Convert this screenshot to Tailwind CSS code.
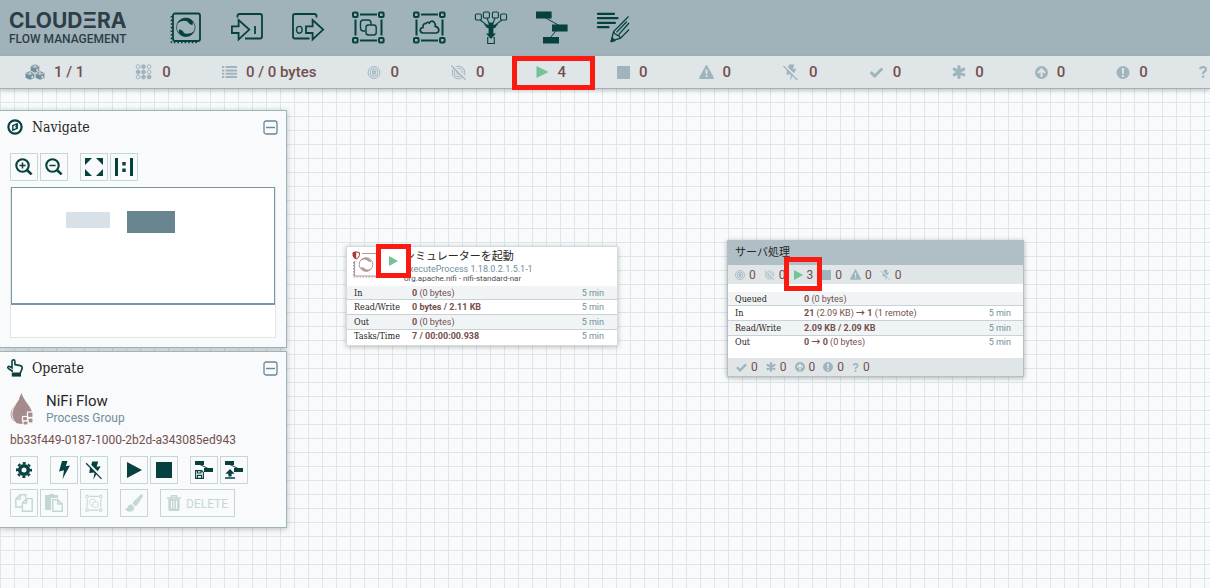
<!DOCTYPE html>
<html lang="ja">
<head>
<meta charset="utf-8">
<meta name="viewport" content="width=device-width, initial-scale=1">
<title>Cloudera Flow Management</title>
<script src="https://cdn.jsdelivr.net/npm/@tailwindcss/browser@4"></script>
</head>
<body class="h-screen flex flex-col overflow-hidden bg-[#f9fafb] font-['Roboto','Noto_Sans_CJK_JP',sans-serif] text-[#262626]">

<!-- Shared icon sprite -->
<svg class="hidden" aria-hidden="true">
  <symbol id="target" viewBox="0 0 13 13"><g fill="none" stroke="currentColor"><circle cx="6.5" cy="6.5" r="5.9" stroke-width="1"/><circle cx="6.5" cy="6.5" r="3.8" stroke-width="1"/><circle cx="6.5" cy="6.5" r="1.4" stroke-width="1.5"/></g></symbol>
  <symbol id="untarget" viewBox="0 0 17 15"><g fill="none" stroke="currentColor"><circle cx="8.5" cy="7.5" r="6.3"/><circle cx="8.5" cy="7.5" r="4.1"/><circle cx="8.5" cy="7.5" r="1.8"/><path d="M2.6 0 L16.4 13.8" stroke="#e0e5e8" stroke-width="2"/><path d="M1.2 .4 L15.6 14.8" stroke-width="1.2"/></g></symbol>
  <symbol id="play" viewBox="0 0 12 12"><path d="M0 0L12 6L0 12Z" fill="currentColor"/></symbol>
  <symbol id="stop" viewBox="0 0 13 13"><path d="M0 0H13V13H0Z" fill="currentColor"/></symbol>
  <symbol id="warn" viewBox="0 0 15 14"><path fill="currentColor" fill-rule="evenodd" d="M7.5 0Q8 0 8.4.7L14.8 12.4Q15.3 14 14 14H1Q-.3 14 .2 12.4L6.6.7Q7 0 7.5 0ZM6.5 4.5L6.8 9.3H8.2L8.5 4.5ZM6.6 10.3V12.1H8.4V10.3Z"/></symbol>
  <symbol id="bolt" viewBox="0 0 12 18"><path fill="currentColor" d="M4 0H9.5L7.8 5.3L12 4.5L4.6 18L6 9.3L1 10.4Z"/></symbol>
  <symbol id="nobolt" viewBox="0 0 17 17"><path fill="currentColor" d="M6.5 .5H11.8L10.4 5.2L14 4.6L11.4 9.2L5.6 3.6ZM4.6 5.4L9.6 10.6L10.4 11.4L7.4 16.8L8.6 10.2L3.8 10.8Z"/><path d="M1 2L14.8 16" stroke="currentColor" stroke-width="1.2"/></symbol>
  <symbol id="check" viewBox="0 0 14 11"><path d="M1.2 5.2L5.2 9L12.8 1.5" fill="none" stroke="currentColor" stroke-width="3"/></symbol>
  <symbol id="asterisk" viewBox="0 0 14 14"><path d="M7 1.6V12.4M2.2 4.2L11.8 9.8M11.8 4.2L2.2 9.8" fill="none" stroke="currentColor" stroke-width="3.2" stroke-linecap="round"/></symbol>
  <symbol id="arrowup" viewBox="0 0 13 13"><path fill="currentColor" fill-rule="evenodd" d="M6.5 0A6.5 6.5 0 1 1 6.5 13A6.5 6.5 0 1 1 6.5 0ZM6.5 2L2.2 6.3L3.6 7.7L5.5 5.9V11H7.5V5.9L9.4 7.7L10.8 6.3Z"/></symbol>
  <symbol id="exclaim" viewBox="0 0 13 13"><path fill="currentColor" fill-rule="evenodd" d="M6.5 0A6.5 6.5 0 1 1 6.5 13A6.5 6.5 0 1 1 6.5 0ZM5.3 2.2L5.7 8H7.3L7.7 2.2ZM5.5 9V10.9H7.5V9Z"/></symbol>
  <symbol id="question" viewBox="0 0 8 12"><path d="M1 3.3Q1.6 1 4 1Q7 1.2 6.9 3.6Q6.8 5 5.2 5.8Q4 6.4 4 8" fill="none" stroke="currentColor" stroke-width="2.2"/><path d="M2.9 9.4H5.2V11.8H2.9Z" fill="currentColor"/></symbol>
  <symbol id="processor" viewBox="0 0 34 34"><g fill="none" stroke="currentColor"><rect x="4" y="2.5" width="27" height="27.5" rx="2" stroke-width="1.8"/><path d="M2.5 5V31.5H29" stroke-width="1.6" stroke-dasharray="1.6 2"/><circle cx="16.8" cy="16.3" r="9.3" stroke-width=".7"/></g><path fill="currentColor" d="M8 12.5Q11 7 17 7Q22 7 24 11L23.5 14Q20.5 14 18.5 10.6Q13.5 8.2 8 12.5ZM25.6 20Q22.6 25.6 16.6 25.6Q11.6 25.6 9.6 21.6L10.1 18.6Q13.1 18.6 15.1 22Q20.1 24.4 25.6 20Z"/></symbol>
  <symbol id="frame" viewBox="0 0 33 34"><g fill="none" stroke="currentColor"><path d="M8 4.5H25M8 30.5H25M3.5 9.5V25.5M29.5 9.5V25.5" stroke-width="2"/><g stroke-width="2"><rect x="1" y="2.5" width="4.6" height="4.6" rx="1"/><rect x="27" y="2.5" width="4.6" height="4.6" rx="1"/><rect x="1" y="28" width="4.6" height="4.6" rx="1"/><rect x="27" y="28" width="4.6" height="4.6" rx="1"/></g></g></symbol>
  <symbol id="group" viewBox="0 0 33 34"><use href="#frame"/><g fill="none" stroke="currentColor"><path d="M13.5 21H11.5Q8.5 21 8.5 18V13Q8.5 10 11.5 10H16Q19 10 19 13V15" stroke-width="1.4"/><rect x="14" y="15" width="10.2" height="10" rx="2.5" stroke-width="1.4"/></g></symbol>
</svg>

<header class="relative z-20 flex flex-col shrink-0">
  <div class="flex items-center h-14 bg-[#a0b2ba]">
    <h1 class="w-[155px] shrink-0 pl-[9px] text-[#2f3d48]" aria-label="Cloudera Flow Management">
      <span class="block text-[21px] leading-[22px] font-bold whitespace-nowrap font-['Inter',sans-serif]">CLOUDΞRA</span>
      <span class="block text-[12px] leading-[14px] font-medium whitespace-nowrap">FLOW MANAGEMENT</span>
    </h1>
    <nav class="flex text-[#06413f]" aria-label="Components">
      <button class="w-[61px] h-14 grid place-items-center" aria-label="Processor"><svg class="w-[34px] h-[34px]"><use href="#processor"/></svg></button>
      <button class="w-[61px] h-14 grid place-items-center" aria-label="Input Port"><svg class="w-[34px] h-[34px]" viewBox="-1 1 34 34" fill="none" stroke="currentColor" stroke-width="1.8"><path d="M6.5 7.5V6Q6.5 4 8.5 4H29Q31 4 31 6V26.5Q31 28.5 29 28.5H14"/><path d="M.9 16.3H7.6V10L18.3 19.6L7.6 29.5V23H.9Z"/><path d="M24 16V24"/></svg></button>
      <button class="w-[61px] h-14 grid place-items-center" aria-label="Output Port"><svg class="w-[34px] h-[34px]" viewBox="-1 1 34 34" fill="none" stroke="currentColor" stroke-width="1.8"><path d="M24.5 7.5V6Q24.5 4 22.5 4H3Q1 4 1 6V26.5Q1 28.5 3 28.5H17.5"/><path d="M14 16.3H20.6V10L31.2 19.6L20.6 29.5V23H14Z"/><ellipse cx="7.3" cy="19.8" rx="2.8" ry="3.4" stroke-width="1.4"/></svg></button>
      <button class="w-[61px] h-14 grid place-items-center" aria-label="Process Group"><svg class="w-[33px] h-[34px]" viewBox="0 1 33 34"><use href="#group" width="33" height="34"/></svg></button>
      <button class="w-[61px] h-14 grid place-items-center" aria-label="Remote Process Group"><svg class="w-[33px] h-[34px]" viewBox="0 1 33 34"><use href="#frame" width="33" height="34"/><path d="M10 23Q7 22.6 7.2 19.8Q7.6 17.6 10 17.5Q9.5 13.5 13 13.4Q14.4 11.3 16.3 13Q18 10 21 12Q22.8 13.8 22.2 16.4Q25.6 17 25.8 20Q25.6 23 23 23Z" fill="none" stroke="currentColor" stroke-width="1.7"/></svg></button>
      <button class="w-[61px] h-14 grid place-items-center" aria-label="Funnel"><svg class="w-[34px] h-[34px]" viewBox="-1 1 34 34" fill="none" stroke="currentColor"><g stroke-width="1.1"><rect x=".4" y="4" width="6" height="6" rx="1.3"/><rect x="8.4" y="2" width="6" height="6" rx="1.3"/><rect x="17.4" y="2" width="6" height="6" rx="1.3"/><rect x="25.6" y="4" width="6" height="6" rx="1.3"/><path d="M5 10L11 14.4M12 8L14 13.4M20 8L18 13.4M27 10L21 14.4"/><path d="M13.5 27.5H12.7V33.5H19.3V27.5H18.5"/></g><path d="M9.5 14.5Q16 17.5 22.5 14.5" stroke-width="1.6"/><path d="M11 16.5Q16 18.8 21 16.5" stroke-width="1.4"/><path d="M13.6 12.4H18.4V23.5H21L16 29L11 23.5H13.6Z" fill="currentColor" stroke="none"/></svg></button>
      <button class="w-[61px] h-14 grid place-items-center" aria-label="Template"><svg class="w-[34px] h-[34px]" viewBox="-1 1 34 34"><path d="M8 7L24 16L14 28" fill="none" stroke="currentColor"/><path fill="currentColor" d="M0 1.6H15.6V8.6H0ZM16 14.6H31.6V21.4H16ZM7 27H23V33.6H7Z"/></svg></button>
      <button class="w-[61px] h-14 grid place-items-center" aria-label="Label"><svg class="w-[34px] h-[34px]" viewBox="-1 1 34 34" fill="none" stroke="currentColor"><path d="M.9 3.8H17M.9 8.2H20.5M.9 12.8H18M.9 17.2H11.5" stroke-width="2.2" stroke-linecap="round"/><path d="M31.5 6.5L16.6 21.6L14.2 31L23.6 28.2L32 19.5M29.8 11.5L19.5 22.4M32 13L21.8 24.6M16.6 21.6Q17.5 24.4 20 25Q22.8 25.5 23.6 28.2" stroke-width="1.3"/><path d="M14 32L15 27.6L18.4 30.6Z" fill="currentColor"/></svg></button>
    </nav>
  </div>

  <ul class="relative flex items-center gap-[51px] h-[33px] pl-[25px] bg-[#e0e5e8] border-b border-[#9fb3bc] shadow-[0_2px_4px_rgba(0,0,0,0.2)] text-[15px] leading-5 font-medium text-[#734f4e] whitespace-nowrap *:flex *:shrink-0 *:items-center *:gap-[9px]">
    <li><svg class="w-5 h-4 text-[#728e9b]" viewBox="0 0 20 16" fill="currentColor" stroke="#e0e5e8" stroke-width=".6"><path d="M10 0L14.6 2V7L10 9.2L5.4 7V2ZM5 6.8L9.8 9V14L5 16L.2 14V9ZM15 6.8L19.8 9V14L15 16L10.2 14V9Z"/><path d="M6.2 2.2L10 4L13.8 2.2M1 9.2L5 11L9 9.2M11 9.2L15 11L19 9.2" fill="none"/><path d="M10 1.2L12 2.1L10 3L8 2.1ZM5 8.2L7 9.1L5 10L3 9.1ZM15 8.2L17 9.1L15 10L13 9.1ZM11.4 5.4L13.2 4.6V6.4L11.4 7.3ZM6.4 12.4L8.2 11.6V13.4L6.4 14.2ZM16.4 12.4L18.2 11.6V13.4L16.4 14.2Z" fill="#e0e5e8" stroke="none"/></svg>1 / 1</li>
    <li><svg class="w-[18px] h-4 text-[#a0b4bd]" viewBox="0 0 17 16" fill="none" stroke="currentColor"><g fill="currentColor"><circle cx="2.6" cy="8" r="1.9"/><circle cx="8" cy="8" r="1.9"/><circle cx="13.6" cy="13" r="1.9"/><circle cx="8" cy="13" r="1.9"/><circle cx="8" cy="2.6" r="1.9"/></g><circle cx="2.6" cy="2.6" r="1.9"/><circle cx="13.6" cy="2.6" r="1.9"/><circle cx="13.6" cy="8" r="1.9"/><circle cx="2.6" cy="13" r="1.9"/></svg>0</li>
    <li><svg class="w-[15px] h-3" viewBox="0 0 15 12" stroke="#a0b4bd" stroke-width="2"><path d="M0 1H2.3M0 4.4H2.3M0 7.7H2.3M0 11H2.3M3.7 1H15M3.7 4.4H15M3.7 7.7H15M3.7 11H15"/></svg>0 / 0 bytes</li>
    <li><svg class="w-[14px] h-[13px] text-[#a0b4bd]"><use href="#target"/></svg>0</li>
    <li><svg class="w-[17px] h-[15px] text-[#a0b4bd]"><use href="#untarget"/></svg>0</li>
    <li class="relative"><svg class="w-[13px] h-3 text-[#74c295]"><use href="#play"/></svg>4<span class="absolute -left-6 -top-[6px] w-[83px] h-[34px] border-5 border-[#fb1a12]"></span></li>
    <li><svg class="w-[13px] h-[13px] text-[#a0b4bd]"><use href="#stop"/></svg>0</li>
    <li><svg class="w-[15px] h-[14px] text-[#a0b4bd]"><use href="#warn"/></svg>0</li>
    <li><svg class="w-[18px] h-[17px] text-[#a0b4bd]"><use href="#nobolt"/></svg>0</li>
    <li><svg class="w-[15px] h-[11px] text-[#a0b4bd]"><use href="#check"/></svg>0</li>
    <li><svg class="w-[14px] h-[14px] text-[#a0b4bd]"><use href="#asterisk"/></svg>0</li>
    <li><svg class="w-[13px] h-[13px] text-[#a0b4bd]"><use href="#arrowup"/></svg>0</li>
    <li><svg class="w-[14px] h-[13px] text-[#a0b4bd]"><use href="#exclaim"/></svg>0</li>
    <li><svg class="w-2 h-3 text-[#a0b4bd]"><use href="#question"/></svg></li>
  </ul>
</header>

<main class="relative flex-1 bg-[linear-gradient(to_right,#dde6e8_1px,transparent_1px),linear-gradient(to_bottom,#dde6e8_1px,transparent_1px)] bg-[size:14px_14px] bg-[position:0_13px]">

  <!-- Side panels -->
  <aside class="flex flex-col gap-[3px] w-[287px] pt-[21px]">
    <section class="pb-[9px] bg-[#f9fafb]/97 border border-l-0 border-[#9fb3bc] shadow-[0_1px_6px_rgba(0,0,0,0.25)]">
      <div class="flex items-center h-8 pl-[7px] pr-2 gap-[9px]">
        <svg class="w-4 h-4 text-[#06413f]" viewBox="0 0 16 16"><circle cx="8" cy="8" r="6.6" fill="none" stroke="currentColor" stroke-width="2.2"/><path d="M5.8 6.6L10.2 4.8V9.4L5.8 11.2Z" fill="none" stroke="currentColor" stroke-width="1.4"/><path d="M8 8L10 5V9Z" fill="currentColor"/></svg>
        <h2 class="flex-1 text-[14px] leading-4 font-['DejaVu_Serif_Condensed','DejaVu_Serif',serif]">Navigate</h2>
        <button class="text-[#6b8796]" aria-label="Collapse Navigate"><svg class="w-[15px] h-[15px]" viewBox="0 0 15 15" fill="none" stroke="currentColor"><rect x="1" y="1" width="13" height="13" rx="2" stroke-width="1.3"/><path d="M3 7.5H12" stroke-width="1.4"/></svg></button>
      </div>
      <div class="flex gap-3 mt-[10px] pl-[10px] text-[#06413f]">
        <div class="flex gap-[2px] *:grid *:place-items-center *:w-7 *:h-7 *:border *:border-[#c5d6d7]">
          <button aria-label="Zoom in"><svg class="w-[18px] h-[18px]" viewBox="0 0 18 18" fill="none" stroke="currentColor"><circle cx="7.5" cy="7.5" r="6.2" stroke-width="2.1"/><path d="M12.2 12.2L16.6 16.4" stroke-width="2.6"/><path d="M4.4 7.5H10.6M7.5 4.4V10.6" stroke-width="1.5"/></svg></button>
          <button aria-label="Zoom out"><svg class="w-[18px] h-[18px]" viewBox="0 0 18 18" fill="none" stroke="currentColor"><circle cx="7.5" cy="7.5" r="6.2" stroke-width="2.1"/><path d="M12.2 12.2L16.6 16.4" stroke-width="2.6"/><path d="M4.4 7.5H10.6" stroke-width="1.5"/></svg></button>
        </div>
        <div class="flex gap-[2px] *:grid *:place-items-center *:w-7 *:h-7 *:border *:border-[#c5d6d7]">
          <button aria-label="Fit"><svg class="w-[18px] h-[18px]" viewBox="0 0 18 18" fill="currentColor"><path d="M0 0H7L0 7ZM18 0H11L18 7ZM0 18H7L0 11ZM18 18H11L18 11Z"/></svg></button>
          <button aria-label="Actual size"><svg class="w-[18px] h-[18px]" viewBox="0 0 18 18" fill="currentColor"><path d="M0 0H3V18H0ZM15 0H18V18H15ZM7.3 4H10.7V7.4H7.3ZM7.3 10.6H10.7V14H7.3Z"/></svg></button>
        </div>
      </div>
      <div class="h-[151px] ml-[10px] mr-[10px] mt-[6px] bg-white border border-t-0 border-[#e0e5e7]">
        <div class="relative h-[118px] border border-b-2 border-[#7398aa] bg-white">
          <span class="absolute left-[54px] top-[24px] w-11 h-4 bg-[#d8e1e8]"></span>
          <span class="absolute left-[115px] top-[23px] w-12 h-[22px] bg-[#67848f]"></span>
        </div>
      </div>
    </section>

    <section class="pb-[10px] bg-[#f9fafb]/97 border border-l-0 border-[#9fb3bc] shadow-[0_1px_6px_rgba(0,0,0,0.25)]">
      <div class="flex items-center h-8 pl-[7px] pr-2 gap-[9px]">
        <svg class="w-4 h-[18px] text-[#06413f]" viewBox="0 0 16 18"><path d="M5.2 13V12L1.2 9.3Q.2 8 1.6 7.4Q3.2 7.4 5 8.8V2.2Q5.2.8 6.5.8Q7.8.9 7.9 2.2V5.6L13.4 6.6Q15.2 7 15.2 8.6Q15 11 13.6 13V14" fill="none" stroke="currentColor" stroke-width="1.6"/><path d="M4.8 13.5H14V17.6H4.8Z" fill="currentColor"/></svg>
        <h2 class="flex-1 text-[14px] leading-4 font-['DejaVu_Serif_Condensed','DejaVu_Serif',serif]">Operate</h2>
        <button class="text-[#6b8796]" aria-label="Collapse Operate"><svg class="w-[15px] h-[15px]" viewBox="0 0 15 15" fill="none" stroke="currentColor"><rect x="1" y="1" width="13" height="13" rx="2" stroke-width="1.3"/><path d="M3 7.5H12" stroke-width="1.4"/></svg></button>
      </div>
      <div class="flex gap-3 mt-2 pl-[10px]">
        <svg class="w-6 h-[34px]" viewBox="0 0 24 34"><path d="M11.5 1Q13 6 18 12.5Q22.5 18.5 22.5 23Q22 31.5 11.5 32Q1 31.5 .6 22.5Q.8 18 5.5 12Q9.5 6.5 11.5 1Z" fill="#a58b8b"/><path d="M9 7Q1 17.5 2 23.5Q2.8 29 6 31" fill="none" stroke="#f9fafb" stroke-width="1"/><g fill="#a58b8b" stroke="#f9fafb" stroke-width="1.2"><rect x="17.5" y="20" width="5.5" height="5.5"/><rect x="12.5" y="24.5" width="5" height="4.5"/><rect x="18" y="26" width="5" height="5"/><rect x="13" y="29" width="5" height="4"/></g></svg>
        <div>
          <h3 class="text-[15px] leading-[18px]">NiFi Flow</h3>
          <p class="text-[12px] leading-4 text-[#728e9b]">Process Group</p>
        </div>
      </div>
      <p class="pl-[10px] mt-[6px] text-[12px] leading-4 text-[#734f4e]">bb33f449-0187-1000-2b2d-a343085ed943</p>
      <div class="flex gap-3 mt-2 pl-[10px] text-[#06413f]">
        <div class="flex *:grid *:place-items-center *:w-7 *:h-7 *:border *:border-[#c5d6d7]">
          <button aria-label="Configuration"><svg class="w-4 h-4" viewBox="0 0 16 16"><circle cx="8" cy="8" r="4.3" fill="none" stroke="currentColor" stroke-width="3.6"/><circle cx="8" cy="8" r="7" fill="none" stroke="currentColor" stroke-width="2" stroke-dasharray="3 2.5" stroke-dashoffset="1.5"/></svg></button>
        </div>
        <div class="flex gap-[2px] *:grid *:place-items-center *:w-7 *:h-7 *:border *:border-[#c5d6d7]">
          <button aria-label="Enable"><svg class="w-3 h-[18px]"><use href="#bolt"/></svg></button>
          <button aria-label="Disable"><svg class="w-[19px] h-[19px]"><use href="#nobolt"/></svg></button>
        </div>
        <div class="flex gap-[2px] *:grid *:place-items-center *:w-7 *:h-7 *:border *:border-[#c5d6d7]">
          <button aria-label="Start"><svg class="w-[15px] h-4" viewBox="0 0 15 16"><path d="M0 0L15 8L0 16Z" fill="currentColor"/></svg></button>
          <button aria-label="Stop"><svg class="w-4 h-4"><use href="#stop"/></svg></button>
        </div>
        <div class="flex gap-[2px] *:grid *:place-items-center *:w-7 *:h-7 *:border *:border-[#c5d6d7]">
          <button aria-label="Create template"><svg class="w-5 h-5" viewBox="0 0 20 20"><path d="M5 4L14 8.5L11 12" fill="none" stroke="currentColor"/><path fill="currentColor" d="M1 1H10V5H1ZM10 8H19V12H10Z"/><path d="M1.6 10.6H7.6L9.4 12.4V18.4H1.6ZM3.4 10.6V13H7V10.6M3.4 18V15.4H7.6V18" fill="none" stroke="currentColor" stroke-width="1.1"/></svg></button>
          <button aria-label="Upload template"><svg class="w-5 h-5" viewBox="0 0 20 20"><path d="M5 4L14 8.5" fill="none" stroke="currentColor"/><path fill="currentColor" d="M1 1H10V5H1ZM10 8H19V12H10ZM6 9L10.6 13.8H7.6V16.4H4.4V13.8H1.4ZM1 17.2H11V18.8H1Z"/></svg></button>
        </div>
      </div>
      <div class="flex gap-3 mt-[5px] pl-[10px] text-[#c5d6d7]">
        <div class="flex gap-[2px] *:grid *:place-items-center *:w-7 *:h-7 *:border *:border-[#c5d6d7]">
          <button disabled aria-label="Copy"><svg class="w-[18px] h-[18px]" viewBox="0 0 18 18" fill="none" stroke="currentColor" stroke-width="1.4"><path d="M7 13H.8V5L5 .8H10.6V4M5 .8V5H.8M7.4 9L11.5 4.6H17.2V17.2H7.4ZM11.5 4.6V9H7.4"/></svg></button>
          <button disabled aria-label="Paste"><svg class="w-[18px] h-[18px]" viewBox="0 0 18 18"><path d="M0 1H4V0H9V1H13V4H6V16H0Z" fill="currentColor"/><path d="M7.7 5.7H12.8L17.2 10V17.2H7.7ZM12.8 5.7V10H17.2" fill="none" stroke="currentColor" stroke-width="1.5"/></svg></button>
        </div>
        <div class="flex *:grid *:place-items-center *:w-7 *:h-7 *:border *:border-[#c5d6d7]">
          <button disabled aria-label="Group"><svg class="w-[18px] h-[18px]"><use href="#group"/></svg></button>
        </div>
        <div class="flex *:grid *:place-items-center *:w-7 *:h-7 *:border *:border-[#c5d6d7]">
          <button disabled aria-label="Change color"><svg class="w-[18px] h-[18px]" viewBox="0 0 18 18" fill="currentColor"><path d="M16 .3Q18.6.4 17.6 3L11.8 11.4L10 12.2L7.6 9.8L8.2 8ZM6.6 10.4L9.4 13.2Q9.4 17.4 5 17.7Q1.6 17.6 0 14.4Q2.4 15.2 2.8 12.8Q4 9.8 6.6 10.4Z"/></svg></button>
        </div>
        <button disabled class="flex items-center gap-[5px] h-7 px-[6px] border border-[#c5d6d7] text-[12px] leading-4"><svg class="w-[14px] h-4" viewBox="0 0 14 16"><path d="M4.5 2.5V.7H9.5V2.5M0 3H14" fill="none" stroke="currentColor" stroke-width="1.4"/><path d="M1.4 4H12.6V14.4Q12.6 16 11 16H3Q1.4 16 1.4 14.4Z" fill="currentColor"/><path d="M4.5 5.6V13.6M7 5.6V13.6M9.5 5.6V13.6" stroke="#f9fafb" stroke-width="1"/></svg><span class="pt-[2px]">DELETE</span></button>
      </div>
    </section>
  </aside>

  <!-- Processor on the canvas -->
  <article class="absolute left-[346px] top-[157px] w-[272px] pb-[2px] bg-white border border-[#d5dadc] shadow-[0_1px_5px_rgba(0,0,0,0.25)] text-[9px]">
    <div class="relative flex h-[39px] pt-[3px] pl-[5px]">
      <svg class="w-[52px] h-[28px] shrink-0 text-[#b09b9b]" viewBox="0 0 52 28"><path d="M10 3.5H27V26H2.5V11" fill="none" stroke="currentColor" stroke-width="1.2"/><path d="M1.5 12V27H27" fill="none" stroke="currentColor" stroke-dasharray="1.5 1.5"/><circle cx="14" cy="14.5" r="6.8" fill="none" stroke="currentColor"/><path d="M8 11Q11 6.5 16 8Q19 10 19.4 12Q16 12 14.6 10Q11 8.6 8 11ZM20 18Q17 22.5 12 21Q9 19 8.6 17Q12 17 13.4 19Q17 20.4 20 18Z" fill="currentColor"/><path d="M1 2.6L4.2 1.8L7.4 2.6V5.4Q7 8 4.2 9Q1.4 8 1 5.4Z" fill="#fff" stroke="#a63b3b"/><path d="M1 2.6L4.2 1.8V9Q1.4 8 1 5.4Z" fill="#a63b3b"/></svg>
      <div class="min-w-0 whitespace-nowrap">
        <h3 class="text-[11px] leading-[14px]">シミュレーターを起動</h3>
        <p class="text-[9px] leading-[10px] text-[#728e9b]">ExecuteProcess 1.18.0.2.1.5.1-1</p>
        <p class="text-[8px] leading-[10px] text-[#4f4f4f]">org.apache.nifi - nifi-standard-nar</p>
      </div>
      <span class="absolute left-[29px] -top-[3px] w-[35px] h-[34px] grid place-items-center bg-white border-5 border-[#fb1a12]"><svg class="w-[9px] h-[10px] text-[#74c295]" viewBox="0 0 12 12" preserveAspectRatio="none"><path d="M0 0L12 6L0 12Z" fill="currentColor"/></svg></span>
    </div>
    <table class="w-full h-[57px] leading-3 text-[#734f4e]">
      <tbody class="[&>tr:not(:last-child)]:border-b *:border-[#c7d2d7] *:odd:bg-[#f1f4f5]">
        <tr><th scope="row" class="w-[65px] pl-[7px] text-left font-normal text-[#262626] font-['DejaVu_Serif_Condensed','DejaVu_Serif',serif]">In</th><td><b>0</b> (0 bytes)</td><td class="w-[50px] pr-[13px] text-right text-[#728e9b]">5 min</td></tr>
        <tr><th scope="row" class="pl-[7px] text-left font-normal text-[#262626] font-['DejaVu_Serif_Condensed','DejaVu_Serif',serif]">Read/Write</th><td><b>0 bytes / 2.11 KB</b></td><td class="pr-[13px] text-right text-[#728e9b]">5 min</td></tr>
        <tr><th scope="row" class="pl-[7px] text-left font-normal text-[#262626] font-['DejaVu_Serif_Condensed','DejaVu_Serif',serif]">Out</th><td><b>0</b> (0 bytes)</td><td class="pr-[13px] text-right text-[#728e9b]">5 min</td></tr>
        <tr><th scope="row" class="pl-[7px] text-left font-normal text-[#262626] font-['DejaVu_Serif_Condensed','DejaVu_Serif',serif]">Tasks/Time</th><td><b>7 / 00:00:00.938</b></td><td class="pr-[13px] text-right text-[#728e9b]">5 min</td></tr>
      </tbody>
    </table>
  </article>

  <!-- Process group on the canvas -->
  <article class="absolute left-[727px] top-[151px] w-[297px] bg-white border border-[#b3bfc5] shadow-[0_1px_5px_rgba(0,0,0,0.3)] text-[9px]">
    <h3 class="h-6 pl-[7px] text-[11px] leading-6 bg-[#b0bec5]">サーバ処理</h3>
    <ul class="relative flex items-center h-[19px] pl-[7px] gap-2 bg-[#e0e5e8] text-[12px] leading-4 text-[#734f4e] *:flex *:items-center *:gap-1">
      <li><svg class="w-[10px] h-[10px] text-[#a0b4bd]"><use href="#target"/></svg>0</li>
      <li><svg class="w-[11px] h-3 text-[#a0b4bd]"><use href="#untarget"/></svg>0</li>
      <li><svg class="w-[9px] h-[10px] text-[#74c295]" viewBox="0 0 12 12" preserveAspectRatio="none"><path d="M0 0L12 6L0 12Z" fill="currentColor"/></svg>3</li>
      <li><svg class="w-[10px] h-[10px] text-[#a0b4bd]"><use href="#stop"/></svg>0</li>
      <li><svg class="w-[11px] h-[11px] text-[#a0b4bd]"><use href="#warn"/></svg>0</li>
      <li><svg class="w-[11px] h-3 text-[#a0b4bd]"><use href="#nobolt"/></svg>0</li>
      <li class="absolute left-[56px] -top-2 w-[38px] h-[34px] border-5 border-[#fb1a12]" aria-hidden="true"></li>
    </ul>
    <table class="w-full h-[57px] mt-2 leading-3 text-[#734f4e]">
      <tbody class="[&>tr:not(:last-child)]:border-b *:border-[#c7d2d7] *:odd:bg-[#f1f4f5]">
        <tr><th scope="row" class="w-[76px] pl-[7px] text-left font-normal text-[#262626] font-['DejaVu_Serif_Condensed','DejaVu_Serif',serif]">Queued</th><td><b>0</b> (0 bytes)</td><td class="w-[50px]"></td></tr>
        <tr><th scope="row" class="pl-[7px] text-left font-normal text-[#262626] font-['DejaVu_Serif_Condensed','DejaVu_Serif',serif]">In</th><td><b>21</b> (2.09 KB) <b>→ 1</b> (1 remote)</td><td class="pr-[12px] text-right text-[#728e9b]">5 min</td></tr>
        <tr><th scope="row" class="pl-[7px] text-left font-normal text-[#262626] font-['DejaVu_Serif_Condensed','DejaVu_Serif',serif]">Read/Write</th><td><b>2.09 KB / 2.09 KB</b></td><td class="pr-[12px] text-right text-[#728e9b]">5 min</td></tr>
        <tr><th scope="row" class="pl-[7px] text-left font-normal text-[#262626] font-['DejaVu_Serif_Condensed','DejaVu_Serif',serif]">Out</th><td><b>0 → 0</b> (0 bytes)</td><td class="pr-[12px] text-right text-[#728e9b]">5 min</td></tr>
      </tbody>
    </table>
    <ul class="flex items-center h-[18px] mt-[9px] pl-2 gap-2 bg-[#e0e5e8] text-[12px] leading-4 text-[#734f4e] *:flex *:items-center *:gap-1">
      <li><svg class="w-[11px] h-[9px] text-[#a0b4bd]"><use href="#check"/></svg>0</li>
      <li><svg class="w-[10px] h-[10px] text-[#a0b4bd]"><use href="#asterisk"/></svg>0</li>
      <li><svg class="w-[10px] h-[10px] text-[#a0b4bd]"><use href="#arrowup"/></svg>0</li>
      <li><svg class="w-[10px] h-[10px] text-[#a0b4bd]"><use href="#exclaim"/></svg>0</li>
      <li><svg class="w-[7px] h-[9px] text-[#a0b4bd]"><use href="#question"/></svg>0</li>
    </ul>
  </article>
</main>
</body>
</html>
